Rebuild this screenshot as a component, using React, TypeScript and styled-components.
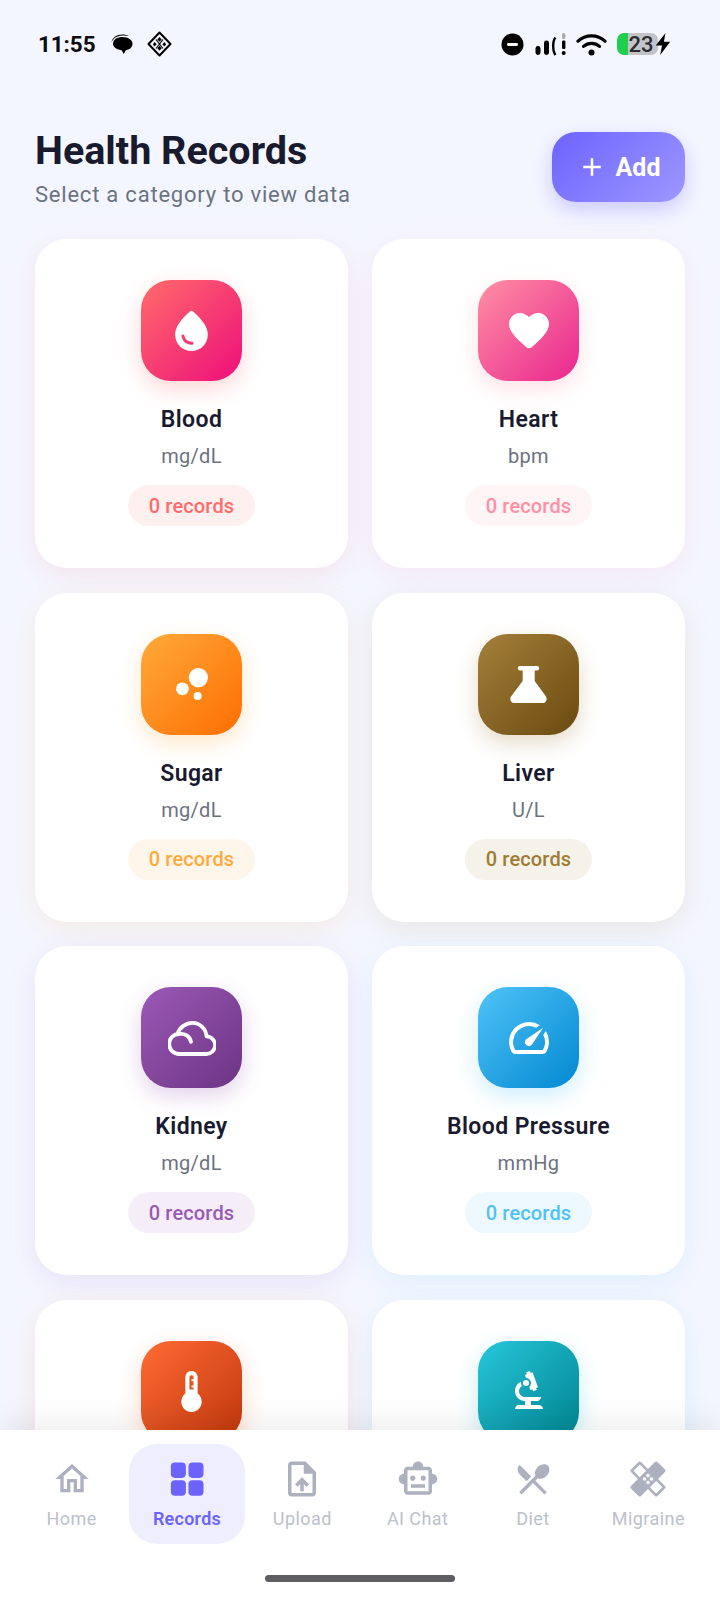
import React from 'react';
import styled, { createGlobalStyle } from 'styled-components';
import {
  MdBubbleChart, MdSpeed, MdThermostat, MdBiotech,
  MdOutlineHome, MdOutlineUploadFile, MdOutlineSmartToy, MdLocalDining, MdHealing, MdAdd,
} from 'react-icons/md';

const Global = createGlobalStyle`
  html, body { margin: 0; padding: 0; background: #f4f6ff; }
  body { font-family: Roboto, "Liberation Sans", sans-serif; }
`;

const Screen = styled.div`
  position: relative;
  width: 720px;
  height: 1600px;
  overflow: hidden;
  background: #f4f6ff;
`;

const StatusBar = styled.div`
  display: flex;
  align-items: center;
  justify-content: space-between;
  height: 88px;
  padding: 0 49px 0 38px;
  box-sizing: border-box;
`;

const StatusGroup = styled.div<{ $gap: number }>`
  display: flex;
  align-items: center;
  gap: ${(p) => p.$gap}px;
`;

const Time = styled.span`
  font-size: 22.5px;
  font-weight: 700;
  color: #0d0d0f;
  letter-spacing: -0.1px;
  margin-right: 2px;
`;

const Battery = styled.div`
  width: 41px;
  height: 22px;
  margin-right: -13px;
  padding-left: 7px;
  box-sizing: border-box;
  border-radius: 7px;
  background: linear-gradient(90deg, #1fce4f 0 11px, #c3c4ca 11px);
  display: flex;
  align-items: center;
  justify-content: center;
  font-size: 22px;
  font-weight: 500;
  color: #2c2c30;
`;

const DndWrap = styled.div`
  display: flex;
  margin-right: 1px;
`;

const Header = styled.header`
  display: flex;
  align-items: flex-start;
  justify-content: space-between;
  padding: 42px 35px 0;
  height: 151px;
  box-sizing: border-box;
`;

const Title = styled.h1`
  margin: 0;
  font-size: 39.5px;
  line-height: 42px;
  font-weight: 700;
  color: #1a1a2e;
`;

const Subtitle = styled.p`
  margin: 8px 0 0;
  font-size: 22px;
  line-height: 30px;
  color: #6b7280;
  letter-spacing: 0.78px;
`;

const AddButton = styled.button`
  display: flex;
  align-items: center;
  justify-content: center;
  gap: 9px;
  width: 133px;
  height: 70px;
  margin-top: 2px;
  border: none;
  border-radius: 24px;
  background: linear-gradient(135deg, #6c63ff, #9d97ff);
  box-shadow: 0 8px 20px rgba(108, 99, 255, 0.3);
  color: #fff;
  font-family: inherit;
  font-size: 25px;
  font-weight: 700;
  padding: 0;
`;

const Grid = styled.div`
  display: grid;
  grid-template-columns: 313px 313px;
  grid-auto-rows: 329px;
  column-gap: 24px;
  row-gap: 24.5px;
  padding: 0 35px;
`;

const Card = styled.div<{ $c: string }>`
  display: flex;
  flex-direction: column;
  align-items: center;
  padding-top: 41px;
  box-sizing: border-box;
  background: #fff;
  border-radius: 32px;
  box-shadow: 0 8px 28px ${(p) => p.$c}1f;
`;

const IconTile = styled.div<{ $from: string; $to: string; $c: string }>`
  display: flex;
  align-items: center;
  justify-content: center;
  width: 101px;
  height: 101px;
  border-radius: 30px;
  background: linear-gradient(135deg, ${(p) => p.$from}, ${(p) => p.$to});
  box-shadow: 0 8px 22px ${(p) => p.$c}47;
  color: #fff;
`;

const CardName = styled.div`
  margin-top: 25px;
  font-size: 23px;
  line-height: 28px;
  font-weight: 600;
  letter-spacing: 0.4px;
  color: #1a1a2e;
`;

const Unit = styled.div`
  margin-top: 9px;
  font-size: 20px;
  line-height: 26px;
  color: #6b7280;
  letter-spacing: 0.3px;
`;

const Count = styled.div<{ $c: string }>`
  display: flex;
  align-items: center;
  justify-content: center;
  margin-top: 16px;
  width: 127px;
  height: 41px;
  border-radius: 21px;
  background: ${(p) => p.$c}1a;
  color: ${(p) => p.$c};
  font-size: 20px;
  font-weight: 500;
  letter-spacing: 0.15px;
`;

const BottomNav = styled.nav`
  position: absolute;
  left: 0;
  right: 0;
  bottom: 0;
  height: 170px;
  box-sizing: border-box;
  padding: 14px 14px 0;
  background: #fff;
  box-shadow: 0 -8px 30px rgba(0, 0, 0, 0.07);
  display: grid;
  grid-template-columns: repeat(6, 1fr);
  align-items: start;
`;

const NavItem = styled.div<{ $active?: boolean }>`
  display: flex;
  flex-direction: column;
  align-items: center;
  height: 100px;
  box-sizing: border-box;
  padding-top: 11px;
  border-radius: 28px;
  background: ${(p) => (p.$active ? '#efeefe' : 'transparent')};
  color: ${(p) => (p.$active ? '#6c63ff' : '#adb1bf')};
`;

const NavIcon = styled.div`
  display: flex;
  align-items: center;
  justify-content: center;
  width: 48px;
  height: 48px;
`;

const NavLabel = styled.span<{ $active?: boolean }>`
  margin-top: 4px;
  font-size: 18px;
  line-height: 24px;
  font-weight: ${(p) => (p.$active ? 600 : 400)};
  letter-spacing: ${(p) => (p.$active ? 0.25 : 0.45)}px;
  color: ${(p) => (p.$active ? '#6c63ff' : '#bcc0cb')};
`;

const HomeBar = styled.div`
  position: absolute;
  left: 265px;
  bottom: 18px;
  width: 190px;
  height: 7px;
  border-radius: 4px;
  background: #5f5f63;
`;

const Glyph = ({ size = 48, children }: { size?: number; children: React.ReactNode }) => (
  <svg width={size} height={size} viewBox="0 0 24 24" fill="currentColor">{children}</svg>
);

const Drop = () => (
  <Glyph size={49}>
    <path d="M12.66 2.58c-.38-.33-.95-.33-1.33 0C6.45 6.88 4 10.62 4 13.8c0 4.98 3.8 8.2 8 8.2s8-3.22 8-8.2c0-3.18-2.45-6.92-7.34-11.22zM7.83 14c.37 0 .67.26.74.62.41 2.22 2.28 2.98 3.64 2.87.43-.02.79.32.79.75 0 .4-.32.73-.72.75-2.13.13-4.62-1.09-5.19-4.12-.08-.45.28-.87.74-.87z" />
  </Glyph>
);

const Heart = () => (
  <Glyph size={48}>
    <path d="M13.35 20.13c-.76.69-1.93.69-2.69-.01l-.11-.1C5.3 15.27 1.87 12.15 2 8.26c.06-1.7.93-3.33 2.34-4.29 2.64-1.8 5.9-.96 7.66 1.1 1.76-2.06 5.02-2.91 7.66-1.1 1.41.96 2.28 2.59 2.34 4.29.14 3.89-3.3 7.01-8.55 11.78l-.1.09z" />
  </Glyph>
);

const Flask = () => (
  <svg width="37" height="37" viewBox="0 0 37 37" fill="currentColor">
    <path d="M10 0h17a2.2 2.2 0 0 1 0 4.4h-2.3V15L36 30.5c1.7 3 0 6.5-3 6.5H4c-3 0-4.7-3.5-3-6.5L12.7 15V4.4H10a2.2 2.2 0 0 1 0-4.4z" />
  </svg>
);

const Cloud = () => (
  <Glyph size={48}>
    <g fill="none" stroke="currentColor" strokeWidth="1.9" strokeLinecap="round" strokeLinejoin="round">
      <path d="M5.6 20H19a4.4 4.4 0 0 0 .3-8.8C18.9 7.2 15.8 4.4 12.3 4.4 8.9 4.4 5.9 6.6 4.7 10" />
      <path d="M5.6 20a5 5 0 0 1 0-10 5 5 0 0 1 5.9 3.9" />
    </g>
  </Glyph>
);

const GridIcon = () => (
  <Glyph size={44}>
    <rect x="3.2" y="3" width="8.2" height="8.4" rx="2.2" />
    <rect x="12.8" y="3" width="8.2" height="8.4" rx="2.2" />
    <rect x="3.2" y="12.7" width="8.2" height="8.4" rx="2.2" />
    <rect x="12.8" y="12.7" width="8.2" height="8.4" rx="2.2" />
  </Glyph>
);

const BubbleIcon = () => (
  <svg width="24" height="24" viewBox="0 0 24 24">
    <path d="M12.5 5c5.5 0 10 2.8 10 6.8 0 3.6-3.2 6-6.6 6.5l-2.3 3.6-1.9-3.6C7.5 18 3 15.6 3 11.6 3 7.6 7.2 5 12.5 5z" fill="#000" />
    <path d="M1.5 10.5C2 6 6.5 2.6 12.5 2.6c2.3 0 4.5.5 6.2 1.5-1.9-.5-3.9-.7-6-.6C7 3.7 3 6.3 1.5 10.5z" fill="#000" />
  </svg>
);

const DiamondIcon = () => (
  <svg width="25" height="26" viewBox="0 0 25 26">
    <path d="M12.5 1.5 23.5 13 12.5 24.5 1.5 13z" fill="none" stroke="#000" strokeWidth="2" strokeLinejoin="round" />
    <path d="M12.5 6l2.2 2.4-2.2 2.4-2.2-2.4zM7.5 11l2.2 2.2-2.2 2.2-1.6-2.2zM17.5 11l1.6 2.2-1.6 2.2-2.2-2.2zM12.5 14.8l2.2 2.4-2.2 2.6-2.2-2.6z" fill="#000" />
    <path d="M9 8.5l7 9M16 8.5l-7 9" stroke="#000" strokeWidth="1.2" />
  </svg>
);

const DndIcon = () => (
  <svg width="23" height="23" viewBox="0 0 23 23">
    <circle cx="11.5" cy="11.5" r="11" fill="#000" />
    <rect x="6" y="10" width="11" height="3" rx="1.4" fill="#fff" />
  </svg>
);

const SignalIcon = () => (
  <svg width="31" height="24" viewBox="0 0 31 24">
    <rect x="0.5" y="14" width="5" height="9" rx="2.4" fill="#000" />
    <rect x="9" y="8.5" width="5" height="14.5" rx="2.4" fill="#000" />
    <path d="M20.5 5.5c-1.6 1.8-2.3 5-2.3 8.5s.7 7 2.3 9" fill="none" stroke="#000" strokeWidth="2.4" />
    <rect x="27" y="1" width="3.4" height="6" rx="1.6" fill="#a9a9ae" />
    <rect x="27" y="8.5" width="3.4" height="8.5" rx="1.2" fill="#000" />
    <circle cx="28.7" cy="21" r="2" fill="#000" />
  </svg>
);

const WifiIcon = () => (
  <svg width="31" height="23" viewBox="0 0 31 23">
    <path d="M2 8.2C9.5 1.2 21.5 1.2 29 8.2" fill="none" stroke="#000" strokeWidth="3.2" strokeLinecap="round" />
    <path d="M7.5 13.4c4.6-4 11.4-4 16 0" fill="none" stroke="#000" strokeWidth="3.2" strokeLinecap="round" />
    <circle cx="15.5" cy="19.5" r="3" fill="#000" />
  </svg>
);

const BoltIcon = () => (
  <svg width="16" height="22" viewBox="0 0 16 22">
    <path d="M10.5 0 0.8 12.4H7L5.2 22 15.2 8.8H8.9z" fill="#000" />
  </svg>
);

type Category = { name?: string; unit?: string; c: string; from: string; to: string; icon: React.ReactNode };

const categories: Category[] = [
  { name: 'Blood', unit: 'mg/dL', c: '#ff6b6b', from: '#ff6b6b', to: '#ee0f7b', icon: <Drop /> },
  { name: 'Heart', unit: 'bpm', c: '#ff8fa3', from: '#ff8fa3', to: '#e9268f', icon: <Heart /> },
  { name: 'Sugar', unit: 'mg/dL', c: '#ffaa3b', from: '#ffaa3b', to: '#ff6d00', icon: <MdBubbleChart size={48} /> },
  { name: 'Liver', unit: 'U/L', c: '#a07c35', from: '#a3803a', to: '#6b4a10', icon: <Flask /> },
  { name: 'Kidney', unit: 'mg/dL', c: '#9b59b6', from: '#9b59b6', to: '#6c3483', icon: <Cloud /> },
  { name: 'Blood Pressure', unit: 'mmHg', c: '#4fc3f7', from: '#4fc3f7', to: '#0288d1', icon: <MdSpeed size={48} /> },
  { c: '#ff6b35', from: '#ff6b35', to: '#bf360c', icon: <MdThermostat size={49} /> },
  { c: '#26c6da', from: '#26c6da', to: '#00838f', icon: <MdBiotech size={48} /> },
];

const navItems: { label: string; icon: React.ReactNode; active?: boolean }[] = [
  { label: 'Home', icon: <MdOutlineHome size={40} /> },
  { label: 'Records', icon: <GridIcon />, active: true },
  { label: 'Upload', icon: <MdOutlineUploadFile size={42} /> },
  { label: 'AI Chat', icon: <MdOutlineSmartToy size={42} /> },
  { label: 'Diet', icon: <MdLocalDining size={40} /> },
  { label: 'Migraine', icon: <MdHealing size={42} /> },
];

export default function App() {
  return (
    <Screen>
      <Global />
      <StatusBar>
        <StatusGroup $gap={13}>
          <Time>11:55</Time>
          <BubbleIcon />
          <DiamondIcon />
        </StatusGroup>
        <StatusGroup $gap={10}>
          <DndWrap><DndIcon /></DndWrap>
          <SignalIcon />
          <WifiIcon />
          <Battery>23</Battery>
          <BoltIcon />
        </StatusGroup>
      </StatusBar>
      <Header>
        <div>
          <Title>Health Records</Title>
          <Subtitle>Select a category to view data</Subtitle>
        </div>
        <AddButton>
          <MdAdd size={30} />
          Add
        </AddButton>
      </Header>
      <Grid>
        {categories.map((cat, i) => (
          <Card key={i} $c={cat.c}>
            <IconTile $from={cat.from} $to={cat.to} $c={cat.c}>{cat.icon}</IconTile>
            {cat.name && (
              <>
                <CardName>{cat.name}</CardName>
                <Unit>{cat.unit}</Unit>
                <Count $c={cat.c}>0 records</Count>
              </>
            )}
          </Card>
        ))}
      </Grid>
      <BottomNav>
        {navItems.map((item) => (
          <NavItem key={item.label} $active={item.active}>
            <NavIcon>{item.icon}</NavIcon>
            <NavLabel $active={item.active}>{item.label}</NavLabel>
          </NavItem>
        ))}
      </BottomNav>
      <HomeBar />
    </Screen>
  );
}
